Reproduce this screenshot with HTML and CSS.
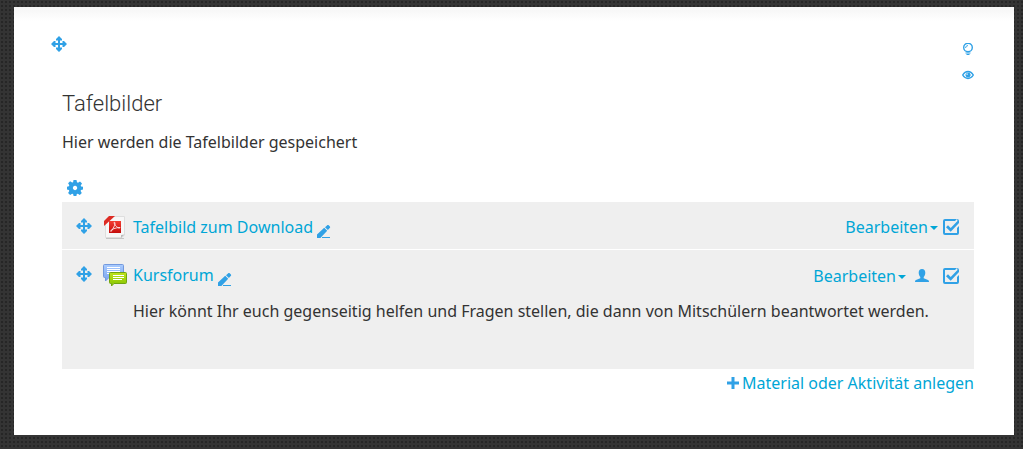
FILE: index.html
```html
<!DOCTYPE html>
<html lang="de">
<head>
<meta charset="utf-8">
<meta name="viewport" content="width=device-width, initial-scale=1">
<title>Tafelbilder</title>
<link rel="stylesheet" href="styles.css">
</head>
<body>
<svg class="sprite" aria-hidden="true">
  <symbol id="move" viewBox="0 0 16 16"><path d="M8 0l3 3v1.500H9V7h2.500V5H13l3 3-3 3h-1.500V9H9v2.500h2V13l-3 3-3-3v-1.500h2V9H4.500v2H3L0 8l3-3h1.500v2H7V4.500H5V3z"/></symbol>
  <symbol id="pencil" viewBox="0 0 14 14"><path d="M0 13V9.600L7.200 2.800l3 3L3.400 13zM8 2.200L10 .4c.6-.5 1.300-.5 1.900 0l.8.8c.6.6.6 1.300 0 1.900L10.900 5zM5 12h8v1H5z"/></symbol>
  <symbol id="check" viewBox="0 0 16 16"><path d="M2 0h12l-2 2H2v12h12V9l2-2v7a2 2 0 0 1-2 2H2a2 2 0 0 1-2-2V2a2 2 0 0 1 2-2zM14 0a2 2 0 0 1 2 2v2l-8.300 8.800L3 8.300l2-2 2.700 2.600L14.500 2z"/></symbol>
</svg>
<main class="card">
  <div class="tools">
    <button class="icon" aria-label="Abschnitt verschieben"><svg class="i16"><use href="#move"/></svg></button>
    <div class="side">
      <button class="icon" aria-label="Hervorheben"><svg class="i12" viewBox="0 0 12 12"><circle class="line bold" cx="6" cy="4.500" r="4.300"/><path class="line" d="M3.700 5A2 2 0 0 1 6 2.700"/><path d="M3.500 9.500h5v1h-5zM4.500 11h3v1h-3z"/></svg></button>
      <button class="icon" aria-label="Verbergen"><svg class="i12" viewBox="0 0 12 12"><path class="line bold" d="M.7 6C3.300 1.400 8.700 1.400 11.300 6 8.700 10.600 3.300 10.600.7 6z"/><path fill-rule="evenodd" d="M6 3.400a2.600 2.600 0 1 0 .1 0zM4.500 4.500h1.200v1.200H4.500z"/></svg></button>
    </div>
  </div>
  <section class="section">
    <h1 class="title">Tafelbilder</h1>
    <p class="summary">Hier werden die Tafelbilder gespeichert</p>
    <button class="icon settings" aria-label="Abschnitt bearbeiten"><svg class="i16" viewBox="0 0 16 16"><path fill-rule="evenodd" d="M6.500 0h3l.5 2.300 1 .5 2-1.300 2 2-1.300 2 .4 1L16 6.700v2.800l-2 .5-.4 1 1.200 2-2 2-2-1.300-1 .4L9.400 16H6.600l-.5-1.900-1-.4-2 1.300-2-2 1.200-2-.4-1L0 9.500V6.700l1.900-.4.4-1-1.200-2 2-2 2 1.300 1-.4zM8 5.800a2.200 2.200 0 1 0 .1 0z"/></svg></button>
    <ul class="activities">
      <li class="activity">
        <button class="icon" aria-label="Verschieben"><svg class="i16"><use href="#move"/></svg></button>
        <svg class="type" viewBox="0 0 24 24" aria-hidden="true">
          <defs><linearGradient id="red" x2="0" y2="1"><stop stop-color="#f33d32"/><stop offset="1" stop-color="#c50d0c"/></linearGradient></defs>
          <path d="M3 23.500h18" stroke="#c5c5c5"/>
          <path d="M9 1.500h12.500V20L19 22.500H2.500V7z" fill="#f7f7f7" stroke="#dedede"/>
          <path d="M21.500 19.500L18 20v3z" fill="#bbb"/>
          <path d="M6 1h6L1 11V6z" fill="#dd2b23"/>
          <path d="M6 6h12v12H6z" fill="url(#red)"/>
          <path d="M11 7.500c2-1 1 4-3 9-2-1 4-4 9-4 0 2-5-1-6-5z" fill="none" stroke="#fff" stroke-width=".8"/>
        </svg>
        <div class="name"><a href="#">Tafelbild zum Download</a><button class="icon edit" aria-label="Titel bearbeiten"><svg class="i14"><use href="#pencil"/></svg></button></div>
        <div class="actions"><button class="menu">Bearbeiten</button><button class="icon" aria-label="Abgeschlossen"><svg class="i16"><use href="#check"/></svg></button></div>
      </li>
      <li class="activity forum">
        <button class="icon" aria-label="Verschieben"><svg class="i16"><use href="#move"/></svg></button>
        <svg class="type" viewBox="0 0 24 24" aria-hidden="true">
          <defs><linearGradient id="blue" x2="0" y2="1"><stop stop-color="#a9cbff"/><stop offset="1" stop-color="#7ba5ee"/></linearGradient><linearGradient id="green" x2="0" y2="1"><stop stop-color="#bfe31c"/><stop offset="1" stop-color="#84c400"/></linearGradient></defs>
          <path d="M1.500 1.500h18a1 1 0 0 1 1 1v11a1 1 0 0 1-1 1H6L2.500 18v-3.500h-1a1 1 0 0 1-1-1v-11a1 1 0 0 1 1-1z" fill="url(#blue)" stroke="#7399dd"/>
          <path d="M4 4.500h13M4 6.500h13M4 8.500h13M4 10.500h13" stroke="#fff"/>
          <path d="M7.500 9.500h15a1 1 0 0 1 1 1v9a1 1 0 0 1-1 1H11L8.500 23v-2.500h-1a1 1 0 0 1-1-1v-9a1 1 0 0 1 1-1z" fill="url(#green)" stroke="#70a510"/>
          <path d="M10 12.500h11M10 14.500h11M10 16.500h9" stroke="#fff"/>
        </svg>
        <div class="name"><a href="#">Kursforum</a><button class="icon edit" aria-label="Titel bearbeiten"><svg class="i14"><use href="#pencil"/></svg></button></div>
        <div class="actions"><button class="menu">Bearbeiten</button><button class="icon person" aria-label="Gruppenmodus"><svg class="i14" viewBox="0 0 14 14"><path d="M7 0C9.200 0 10.300 1.500 10.300 3.800 10.300 5.800 9.500 7 8.700 8v1.300L13 11c.7.300 1 1 1 2H0c0-1 .3-1.700 1-2l4.300-1.700V8C4.500 7 3.700 5.800 3.700 3.800 3.700 1.500 4.800 0 7 0z"/></svg></button><button class="icon" aria-label="Abgeschlossen"><svg class="i16"><use href="#check"/></svg></button></div>
        <p class="description">Hier könnt Ihr euch gegenseitig helfen und Fragen stellen, die dann von Mitschülern beantwortet werden.</p>
      </li>
    </ul>
    <a class="add" href="#"><svg class="i12" viewBox="0 0 12 12" aria-hidden="true"><path d="M4.500 0h3v4.500H12v3H7.500V12h-3V7.500H0v-3h4.500z"/></svg>Material oder Aktivität anlegen</a>
  </section>
</main>
</body>
</html>
```
FILE: styles.css
```css
* { box-sizing: border-box; }
body {
  margin: 0;
  padding: 7px 9px 14px 14px;
  background: #343434 radial-gradient(circle, #262626 1px, transparent 1px) 0 0 / 4px 4px;
  color: #333;
  font: 16px/24px "Noto Sans", "Open Sans", sans-serif;
}
h1, p, ul { margin: 0; padding: 0; }
a { color: #00a6d6; text-decoration: none; }
button { padding: 0; border: 0; background: none; font: inherit; cursor: pointer; }
svg { display: block; flex: none; fill: #30a1e6; }
.sprite { position: absolute; width: 0; height: 0; }
.line { fill: none; stroke: #30a1e6; }
.bold { stroke-width: 1.4; }
.i12 { width: 12px; height: 12px; }
.i14 { width: 14px; height: 14px; }
.i16 { width: 16px; height: 16px; }
.card {
  padding: 29px 40px 40px 37px;
  background: #fff linear-gradient(#f5f5f5, #fff) 0 0 / 100% 14px no-repeat;
}
.tools { display: flex; justify-content: space-between; align-items: flex-start; }
.side { display: grid; gap: 14px; padding-top: 7px; }
.section { display: flex; flex-direction: column; padding: 9px 0 0 11px; }
.title { font: 300 22px/28px Roboto, "Open Sans", sans-serif; }
.summary { margin-top: 12px; }
.settings { align-self: flex-start; margin: 26px 0 6px 5px; }
.activities { display: grid; gap: 1px; list-style: none; }
.activity {
  display: grid;
  grid-template-columns: 16px 24px 1fr auto;
  column-gap: 11px;
  align-items: start;
  padding: 13px 15px 10px 14px;
  background: #efefef;
}
.activity > .icon { margin-top: 3px; }
.type { width: 24px; height: 24px; }
.name { display: flex; margin-left: -5px; }
.edit { margin: 9px 0 0 4px; }
.actions { display: flex; align-items: center; }
.menu { display: flex; align-items: center; gap: 2px; margin-right: 5px; color: #00a6d6; }
.menu::after { content: ""; border: 4px solid transparent; border-top-color: #00a6d6; border-bottom: 0; margin-top: 2px; }
.forum { padding-bottom: 46px; }
.forum .actions { margin-top: 1px; }
.forum .menu { margin-right: 9px; }
.person { margin-right: 14px; }
.description { grid-column: 3 / -1; margin: 11px 0 0 -5px; }
.add { display: flex; align-items: center; align-self: flex-end; gap: 3px; margin-top: 2px; }
```
